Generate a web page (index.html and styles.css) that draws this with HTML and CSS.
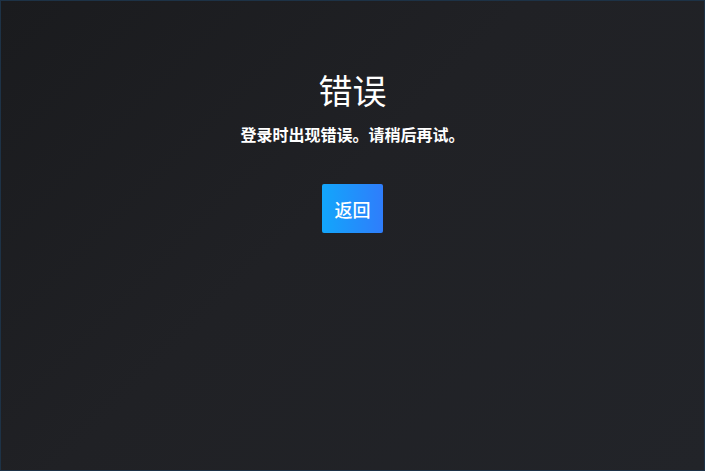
FILE: index.html
```html
<!DOCTYPE html>
<html lang="zh-CN">
<head>
    <meta charset="UTF-8">
    <meta name="viewport" content="width=device-width, initial-scale=1.0">
    <title>错误</title>
    <link rel="stylesheet" href="styles.css">
</head>
<body>
    <div class="page">
        <div class="error-box">
            <h1 class="error-title">错误</h1>
            <p class="error-message">登录时出现错误。请稍后再试。</p>
            <button class="back-button" onclick="history.back()">返回</button>
        </div>
    </div>
</body>
</html>
```

FILE: styles.css
```css
html, body {
    margin: 0;
    height: 100%;
}

body {
    font-family: "Noto Sans CJK SC", "Noto Sans", sans-serif;
    color: #fff;
    background-color: #1f2024;
}

.page {
    box-sizing: border-box;
    height: 100%;
    border: 1px solid #1d3246;
    background: linear-gradient(135deg, #1a1b1e 0%, #202125 45%, #222429 100%);
}

.error-box {
    display: flex;
    flex-direction: column;
    align-items: center;
    padding-top: 65px;
}

.error-title {
    margin: 0;
    font-size: 34px;
    font-weight: 400;
    line-height: 48px;
}

.error-message {
    margin: 9px 0 0;
    font-size: 16px;
    font-weight: 700;
    line-height: 22px;
}

.back-button {
    margin-top: 39px;
    width: 61px;
    height: 49px;
    padding: 0;
    border: none;
    border-radius: 2px;
    background: linear-gradient(90deg, #12a6fb 0%, #2f7dfb 100%);
    color: #fff;
    font-family: inherit;
    font-size: 18px;
    font-weight: 500;
    cursor: pointer;
}
```
